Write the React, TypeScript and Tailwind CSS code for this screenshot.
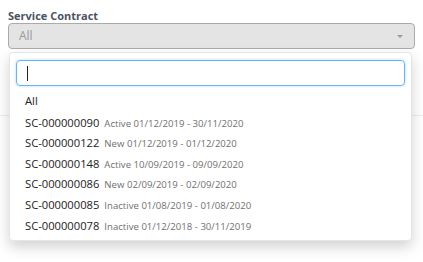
const contracts = [
  { code: 'SC-000000090', status: 'Active', from: '01/12/2019', to: '30/11/2020' },
  { code: 'SC-000000122', status: 'New', from: '01/12/2019', to: '01/12/2020' },
  { code: 'SC-000000148', status: 'Active', from: '10/09/2019', to: '09/09/2020' },
  { code: 'SC-000000086', status: 'New', from: '02/09/2019', to: '02/09/2020' },
  { code: 'SC-000000085', status: 'Inactive', from: '01/08/2019', to: '01/08/2020' },
  { code: 'SC-000000078', status: 'Inactive', from: '01/12/2018', to: '30/11/2019' },
];

export default function App() {
  return (
    <div className="relative w-[423px] h-[262px] bg-white font-['Open_Sans',sans-serif] overflow-hidden">
      <div className="px-2 pt-[8px]">
        <label className="block text-[11px] font-bold text-[#4a5462] leading-[15px]">Service Contract</label>
        <div className="h-[26px] flex items-center justify-between rounded-[4px] border border-[#aaaaaa] bg-[#e4e4e4] pl-[10px] pr-[11px]">
          <span className="text-[12px] text-[#9a9a9a]">All</span>
          <span className="w-0 h-0 border-l-[3.5px] border-r-[3.5px] border-t-[3.5px] border-l-transparent border-r-transparent border-t-[#9a9a9a]" />
        </div>
      </div>
      <div className="mt-[66px] border-b border-[#ececec]" />

      <div className="absolute left-[9px] top-[52px] w-[403px] rounded-[4px] border border-[#e6e6e6] bg-white shadow-[0_6px_14px_rgba(0,0,0,0.18)] px-[6px] pt-[7px] pb-[5px]">
        <div className="h-[26px] rounded-[4px] border border-[#66b4f5] shadow-[0_0_3px_rgba(102,175,233,0.5)] flex items-center pl-[10px]">
          <span className="w-px h-[15px] bg-[#222]" />
        </div>
        <ul className="mt-[5px]">
          <li className="h-[20.6px] flex items-center pl-[9px] text-[11.2px] text-[#222]">All</li>
          {contracts.map((c) => (
            <li key={c.code} className="h-[20.6px] flex items-baseline pt-[3px] pl-[9px] whitespace-nowrap">
              <span className="text-[11.2px] text-[#222]">{c.code}</span>
              <span className="ml-[5px] text-[9.6px] text-[#707070]">
                {c.status} {c.from} - {c.to}
              </span>
            </li>
          ))}
        </ul>
      </div>
    </div>
  );
}
